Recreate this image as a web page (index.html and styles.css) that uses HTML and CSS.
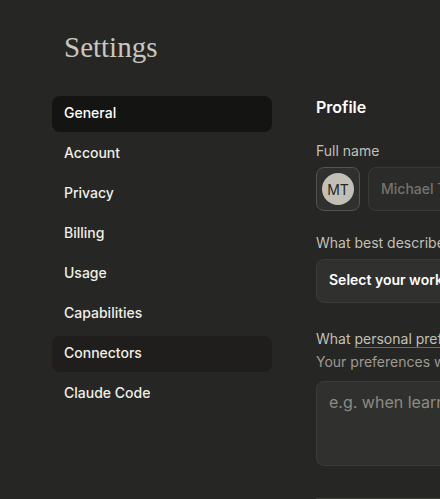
FILE: index.html
```html
<!DOCTYPE html>
<html lang="en">
  <head>
    <meta charset="utf-8">
    <title>Settings</title>
    <link rel="stylesheet" href="styles.css">
  </head>
  <body>
    <div class="page">
      <h1 class="title">Settings</h1>
      <div class="layout">
        <nav class="nav">
          <a class="nav-item active">General</a>
          <a class="nav-item">Account</a>
          <a class="nav-item">Privacy</a>
          <a class="nav-item">Billing</a>
          <a class="nav-item">Usage</a>
          <a class="nav-item">Capabilities</a>
          <a class="nav-item hover">Connectors</a>
          <a class="nav-item">Claude Code</a>
        </nav>
        <main class="main">
          <h2 class="section-title">Profile</h2>
          <div class="field">
            <label class="label">Full name</label>
            <div class="name-row">
              <div class="avatar-box"><span class="avatar">MT</span></div>
              <div class="input muted">Michael Thompson</div>
            </div>
          </div>
          <div class="field wide">
            <label class="label">What best describes your work?</label>
            <div class="select">Select your work function</div>
          </div>
          <div class="field">
            <label class="label">What <span class="dotted">personal preferences</span> should Claude consider in responses?</label>
            <p class="hint">Your preferences will apply to all conversations, within Anthropic's guidelines.</p>
            <div class="textarea">e.g. when learning new concepts, I find analogies particularly helpful</div>
          </div>
          <div class="next-box"></div>
        </main>
      </div>
    </div>
  </body>
</html>
```

FILE: styles.css
```css
html, body {
  margin: 0;
  padding: 0;
  overflow: hidden;
  background-color: #262624;
  height: 100%;
}

body {
  font-family: Inter, "Noto Sans", sans-serif;
  color: #faf9f5;
}

.page {
  padding: 28px 0 0 52px;
  width: 900px;
}

.title {
  font-family: "Liberation Serif", serif;
  font-weight: 400;
  font-size: 29px;
  line-height: 38px;
  color: #c9c7bd;
  margin: 0 0 30px 12px;
}

.layout {
  display: flex;
  gap: 44px;
}

.nav {
  display: flex;
  flex-direction: column;
  gap: 4px;
  width: 220px;
  flex-shrink: 0;
}

.nav-item {
  display: block;
  height: 36px;
  line-height: 34px;
  padding: 0 12px;
  border-radius: 8px;
  font-size: 14px;
  font-weight: 500;
  color: #f0eee6;
}

.nav-item.active {
  background-color: #141413;
  color: #ffffff;
}

.nav-item.hover {
  background-color: #1f1e1d;
}

.main {
  width: 560px;
  margin-top: -1px;
}

.section-title {
  font-size: 16px;
  font-weight: 600;
  line-height: 24px;
  margin: 0 0 22px;
  color: #ffffff;
}

.field {
  margin-bottom: 22px;
}

.field.wide {
  margin-bottom: 26px;
}

.label {
  display: block;
  font-size: 14px;
  line-height: 20px;
  color: #c2c0b6;
  margin-bottom: 6px;
}

.dotted {
  text-decoration: underline;
  text-decoration-color: #6b6a64;
  text-underline-offset: 3px;
}

.hint {
  font-size: 14px;
  line-height: 20px;
  color: #9c9a92;
  margin: -3px 0 9px;
}

.name-row {
  display: flex;
  gap: 8px;
}

.avatar-box {
  width: 42px;
  height: 42px;
  border: 1px solid #55544f;
  border-radius: 8px;
  background-color: #30302e;
  display: flex;
  align-items: center;
  justify-content: center;
  flex-shrink: 0;
}

.avatar {
  width: 32px;
  height: 32px;
  border-radius: 50%;
  background-color: #c2c0b6;
  color: #262624;
  font-size: 14px;
  display: flex;
  align-items: center;
  justify-content: center;
}

.input, .select, .textarea {
  border: 1px solid #3a3a37;
  border-radius: 8px;
  background-color: #30302e;
  box-sizing: border-box;
}

.input {
  flex: 1;
  height: 44px;
  line-height: 42px;
  padding: 0 12px;
  font-size: 14px;
  font-weight: 500;
  color: #75736d;
  background-color: #2b2b29;
}

.select {
  height: 44px;
  line-height: 40px;
  padding: 0 12px;
  font-size: 14px;
  font-weight: 600;
  color: #ffffff;
  white-space: nowrap;
}

.textarea {
  height: 85px;
  padding: 8px 12px;
  font-size: 16px;
  line-height: 24px;
  color: #8d8b84;
}

.next-box {
  height: 40px;
  border-top: 1px solid #3e3e3a;
  margin-top: 32px;
}
```
